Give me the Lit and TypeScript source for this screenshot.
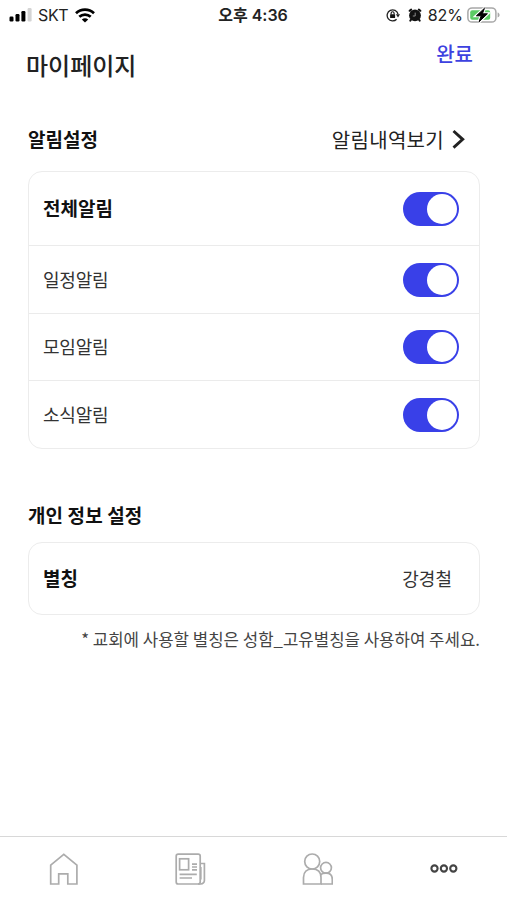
import { LitElement, html, css, svg } from "lit";
import { customElement, property, state } from "lit/decorators.js";
import { classMap } from "lit/directives/class-map.js";

@customElement("status-bar")
class StatusBar extends LitElement {
  static styles = css`
    :host { display: grid; grid-template-columns: 1fr auto 1fr; align-items: center; height: 30px; padding: 0 7px 0 9px; color: #222;
      font: 16px/30px Inter, "Noto Sans CJK KR", sans-serif; }
    .side { display: flex; align-items: center; height: 30px; }
    .end { justify-content: flex-end; }
    .carrier { margin: 0 7px 0 6px; letter-spacing: -0.35px; }
    .time { margin-right: 3px; font-weight: 600; letter-spacing: 0; color: #222; }
    .percent { margin: 0 4px 0 6px; letter-spacing: 0; }
    .alarm { margin-left: 8px; }
    svg { display: block; flex: none; }
  `;
  render() {
    return html`
      <div class="side">
        <svg width="23" height="14" viewBox="0 0 23 14">
          <rect x="0.5" y="8.5" width="4" height="5" rx="1.2" fill="#000" />
          <rect x="6.5" y="6" width="4" height="7.5" rx="1.2" fill="#000" />
          <rect x="12.4" y="3" width="4" height="10.5" rx="1.2" fill="#000" />
          <rect x="18.6" y="0" width="4" height="13.5" rx="1.2" fill="#d4d4d4" />
        </svg>
        <span class="carrier">SKT</span>
        <svg width="20" height="15" viewBox="0 0 20 15" fill="none" stroke="#000" stroke-width="2.7">
          <path d="M1 5.3C6 .5 14 .5 19 5.3" />
          <path d="M4.3 8.8C7.5 5.8 12.5 5.8 15.7 8.8" />
          <path d="M10 14.5L6.8 11.4C8.6 9.8 11.4 9.8 13.2 11.4Z" fill="#000" stroke="none" />
        </svg>
      </div>
      <span class="time">오후 4:36</span>
      <div class="side end">
        <svg width="14" height="14" viewBox="0 0 14 14">
          <path d="M10.6 11.2A5.5 5.5 0 1 1 12 6" fill="none" stroke="#222" stroke-width="1.3" />
          <path d="M9.9 6.2h4.1l-2 3.2z" fill="#222" />
          <rect x="4.1" y="6.2" width="5" height="3.8" rx="0.6" fill="#111" />
          <path d="M5.1 6.4V5.2a1.5 1.5 0 0 1 3 0v1.2" fill="none" stroke="#111" stroke-width="1.1" />
        </svg>
        <svg class="alarm" width="14" height="15" viewBox="0 0 14 15">
          <circle cx="7" cy="7.4" r="5.9" fill="#111" />
          <path d="M1.6 2.8L3.2 1.6M12.4 2.8L10.8 1.6M3.2 11.4L2.3 12.6M10.8 11.4L11.7 12.6" stroke="#111" stroke-width="2" stroke-linecap="round" />
          <path d="M7.2 4.6V8H4.8" fill="none" stroke="#999" stroke-width="0.9" />
        </svg>
        <span class="percent">82%</span>
        <svg width="33" height="18" viewBox="0 0 33 18">
          <rect x="0.9" y="1.9" width="28" height="14.2" rx="4.2" fill="#fff" stroke="#a8a8a8" stroke-width="1.5" />
          <rect x="3.2" y="4.2" width="20" height="9.6" rx="2" fill="#5ccb64" />
          <path d="M30.6 6.6c2.6.6 2.6 4.2 0 4.8z" fill="#a8a8a8" />
          <path d="M17.4 2.4L9.4 9.8h4.8l-2.2 6L20.4 7.8h-5z" fill="#fff" stroke="#fff" stroke-width="3" />
          <path d="M17.4 2.4L9.4 9.8h4.8l-2.2 6L20.4 7.8h-5z" fill="#000" stroke="#000" stroke-width="1" />
        </svg>
      </div>
    `;
  }
}

@customElement("toggle-switch")
class ToggleSwitch extends LitElement {
  @property({ type: Boolean }) on = true;
  static styles = css`
    :host { display: block; flex: none; }
    .track { display: flex; align-items: center; box-sizing: border-box; width: 56px; height: 34px; padding: 0 2.5px; border-radius: 17px; background: #b8b8b8; }
    .track.on { justify-content: flex-end; background: #3940e8; }
    .knob { width: 30px; height: 30px; border-radius: 50%; background: #fff; }
  `;
  render() {
    return html`<div class=${classMap({ track: true, on: this.on })} role="switch" aria-checked=${this.on}
      @click=${() => (this.on = !this.on)}><div class="knob"></div></div>`;
  }
}

const tabIcons = [
  svg`<path d="M1.7 12.2L14.8 1.3L27.9 12.2V31H18.8V20.8H9.7V31H1.7Z" />`,
  svg`<rect x="1.2" y="1.2" width="24" height="29.8" rx="2" /><rect x="4.6" y="5.8" width="9" height="11" />
    <path d="M17 11.2h5M17 14h5M17 16.8h5M4.6 21.3h17.2M4.6 25h12.4M25.2 10.5h4.2v17a3.5 3.5 0 0 1-3.5 3.5H23M25.8 14v12.5" />`,
  svg`<circle cx="10.2" cy="8.5" r="7.5" /><path d="M1.5 31V24.5C1.5 18.8 5 16 10.2 16S19 18.8 19 24.5V31Z" />
    <circle cx="24" cy="14.8" r="5.4" /><path d="M18.5 21.8C19.7 20.6 21.5 20.2 24 20.2C28.2 20.2 30.3 22.6 30.3 26.5V31H19" />`,
  svg`<g class="more"><circle cx="6.5" cy="15.5" r="3.1" /><circle cx="15.9" cy="15.5" r="3.1" /><circle cx="25.3" cy="15.5" r="3.1" /></g>`,
];

@customElement("tab-bar")
class TabBar extends LitElement {
  static styles = css`
    :host { display: grid; grid-template-columns: repeat(4, 1fr); box-sizing: border-box; height: 64px; padding: 15.5px 0 0 1px; border-top: 1px solid #d8d8d8; background: #fff; }
    .tab { display: flex; justify-content: center; }
    svg { display: block; width: 31px; height: 33px; fill: none; stroke: #acacac; stroke-width: 1.7; }
    .more { stroke: #444; stroke-width: 2.1; }
  `;
  render() {
    return html`${tabIcons.map((icon) => html`<div class="tab"><svg viewBox="0 0 31 33">${icon}</svg></div>`)}`;
  }
}

@customElement("app-root")
class AppRoot extends LitElement {
  @state() private alerts = ["전체알림", "일정알림", "모임알림", "소식알림"];
  static styles = css`
    :host { display: flex; flex-direction: column; height: 900px; overflow: hidden; background: #fff; color: #111;
      font-family: "Noto Sans CJK KR", sans-serif; white-space: nowrap; }
    .header { display: flex; justify-content: space-between; height: 92px; padding: 0 34px 0 26px; }
    .title { margin-top: 19px; font-size: 24px; line-height: 32px; font-weight: 500; color: #222; }
    .done { margin-top: 9px; font-size: 20px; line-height: 30px; font-weight: 500; color: #3d42e0; }
    .main { flex: 1; padding: 0 27px 0 28px; }
    .section { display: flex; justify-content: space-between; align-items: center; height: 34px; }
    .heading { font-size: 19px; line-height: 34px; font-weight: 700; }
    .history { display: flex; align-items: center; gap: 8px; padding-right: 15px; font-size: 20px; letter-spacing: 0.3px; color: #222; }
    .card { box-sizing: border-box; border: 1px solid #ececec; border-radius: 14px; }
    .alerts { margin-top: 15px; }
    .row { display: flex; align-items: center; justify-content: space-between; box-sizing: border-box; height: 67.5px; padding: 0 20px 0 14px; font-size: 18px; letter-spacing: -0.2px; color: #333; }
    .row > span { padding-bottom: 2px; }
    .row + .row { border-top: 1px solid #ebebeb; }
    .strong { height: 73.4px; font-size: 19px; font-weight: 700; letter-spacing: 0; color: #111; }
    .personal { margin-top: 49.1px; }
    .personal .heading { letter-spacing: 0.1px; }
    .profile { margin-top: 10px; }
    .profile .strong { height: 71px; padding-right: 27px; }
    .row > .nickname { padding: 0; font-size: 18px; font-weight: 400; color: #333; }
    .note { margin: 11px 0 0; text-align: right; font-size: 16.75px; line-height: 26px; color: #444; }
  `;
  render() {
    return html`
      <status-bar></status-bar>
      <div class="header"><div class="title">마이페이지</div><div class="done">완료</div></div>
      <div class="main">
        <div class="section">
          <div class="heading">알림설정</div>
          <div class="history"><span>알림내역보기</span>
            <svg width="13" height="20" viewBox="0 0 13 20" fill="none" stroke="#222" stroke-width="2.9"><path d="M1.5 2L10.7 10.3L1.5 18.6" /></svg>
          </div>
        </div>
        <div class="card alerts">
          ${this.alerts.map((name, i) => html`<div class=${classMap({ row: true, strong: i === 0 })}><span>${name}</span><toggle-switch></toggle-switch></div>`)}
        </div>
        <div class="section personal"><div class="heading">개인 정보 설정</div></div>
        <div class="card profile"><div class="row strong"><span>별칭</span><span class="nickname">강경철</span></div></div>
        <p class="note">* 교회에 사용할 별칭은 성함_고유별칭을 사용하여 주세요.</p>
      </div>
      <tab-bar></tab-bar>
    `;
  }
}
